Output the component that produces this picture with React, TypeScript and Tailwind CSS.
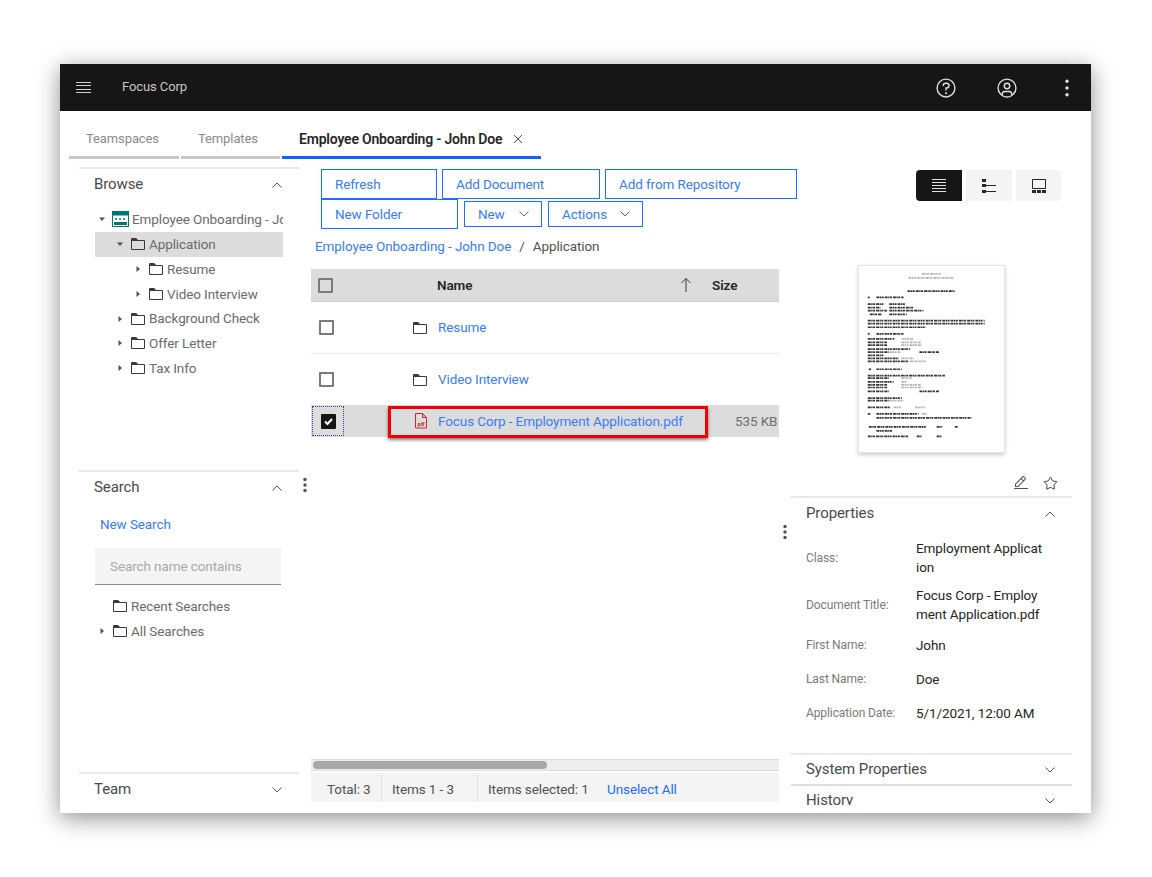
import React from 'react';
import { Star } from 'lucide-react';

// page-thumbnail text lines, measured on a 3x crop: [y, x1, x2, light]
const docLines: Array<[number, number, number, number]> = [
  [341, 395, 452, 1], [353, 355, 492, 1], [393, 352, 495, 0], [412, 232, 238, 0], [412, 258, 340, 0],
  [432, 232, 282, 0], [432, 297, 345, 0], [443, 232, 270, 0], [443, 297, 370, 0], [452, 232, 290, 0],
  [452, 297, 400, 0], [463, 238, 275, 0], [463, 297, 350, 0], [482, 232, 585, 0], [491, 232, 585, 0],
  [502, 232, 408, 0], [522, 232, 238, 0], [522, 258, 340, 0], [537, 232, 312, 0], [537, 335, 370, 1],
  [548, 232, 290, 0], [548, 333, 392, 1], [556, 232, 290, 0], [556, 333, 395, 1], [568, 232, 360, 0],
  [577, 232, 295, 0], [577, 297, 330, 1], [577, 388, 448, 0], [587, 232, 280, 0], [596, 232, 325, 0],
  [596, 333, 370, 1], [605, 232, 355, 0], [605, 360, 410, 1], [629, 235, 242, 0], [629, 258, 335, 0],
  [648, 232, 465, 0], [656, 232, 295, 0], [656, 333, 365, 1], [667, 232, 310, 0], [667, 333, 350, 1],
  [676, 232, 290, 0], [676, 333, 392, 1], [684, 232, 290, 0], [684, 333, 395, 1], [696, 232, 295, 0],
  [696, 388, 448, 0], [716, 232, 335, 0], [724, 232, 295, 0], [724, 297, 340, 1], [744, 232, 300, 0],
  [744, 310, 335, 1], [744, 375, 405, 1], [764, 232, 240, 0], [764, 258, 385, 0], [764, 395, 410, 1],
  [776, 258, 545, 0], [803, 235, 410, 0], [803, 440, 457, 0], [803, 495, 505, 0], [815, 258, 305, 0],
  [832, 232, 355, 0], [832, 380, 395, 0], [832, 440, 455, 0],
];

const FolderIcon = () => (
  <svg width="16" height="16" viewBox="0 0 32 32" fill="#3a3a3a" className="shrink-0">
    <path d="M11.17,6l3.42,3.41.58.59H28V26H4V6h7.17m0-2H4A2,2,0,0,0,2,6V26a2,2,0,0,0,2,2H28a2,2,0,0,0,2-2V10a2,2,0,0,0-2-2H16L12.59,4.59A2,2,0,0,0,11.17,4Z" />
    <path d="M4 5h8l4 4v1H4z" />
  </svg>
);

const Chevron = ({ up = false, color = '#525252', size = 12 }: { up?: boolean; color?: string; size?: number }) => (
  <svg width={size} height={size} viewBox="0 0 12 12" fill="none" stroke={color} strokeWidth="1" className="shrink-0">
    <path d={up ? 'M1.5 8.5 6 4l4.5 4.5' : 'M1.5 3.5 6 8l4.5-4.5'} />
  </svg>
);

const Caret = ({ down = false }: { down?: boolean }) => (
  <svg width="6" height="6" viewBox="0 0 6 6" fill="#525252" className="shrink-0">
    <path d={down ? 'M0 1.5h6L3 5z' : 'M1.5 0v6L5 3z'} />
  </svg>
);

const Kebab = () => (
  <svg width="4" height="16" viewBox="0 0 4 16" fill="#525252">
    <circle cx="2" cy="2.5" r="1.7" />
    <circle cx="2" cy="8" r="1.7" />
    <circle cx="2" cy="13.5" r="1.7" />
  </svg>
);

const Checkbox = () => <div className="h-[15px] w-[15px] shrink-0 rounded-[1px] border-2 border-[#7a7a7a]" />;

const TreeRow = ({ pad, caret, icon, label }: { pad: string; caret?: 'down' | 'right'; icon: React.ReactNode; label: string }) => (
  <div className={`flex h-[24.8px] items-center whitespace-nowrap text-[#6b6b6b] ${pad}`}>
    <div className="mr-[7px] w-[6px] shrink-0">{caret && <Caret down={caret === 'down'} />}</div>
    {icon}
    <span className="ml-[3px]">{label}</span>
  </div>
);

const Action = ({ label, w, chevron }: { label: string; w: string; chevron?: boolean }) => (
  <div className={`flex shrink-0 items-center justify-between border border-[#1f6fff] pl-[13px] text-[#3a7cf6] ${w} ${chevron ? 'h-[26px] pr-[11px]' : 'h-[30px]'}`}>
    <span>{label}</span>
    {chevron && <Chevron color="#1f6fff" />}
  </div>
);

const PropRow = ({ label, lines, h }: { label: string; lines: string[]; h: string }) => (
  <div className={`flex items-center ${h}`}>
    <div className="w-[110px] shrink-0 text-[12px] text-[#7a7a7a]">{label}</div>
    <div className="whitespace-nowrap leading-[19px] text-[#262626]">
      {lines.map((l) => (
        <div key={l}>{l}</div>
      ))}
    </div>
  </div>
);

export default function App() {
  return (
    <div className="min-h-[877px] bg-white pl-[60px] pt-[64px] font-['Roboto',sans-serif] text-[13.5px] tracking-[-0.1px]">
      <div className="flex h-[749px] w-[1031px] flex-col overflow-hidden bg-white shadow-[0_5px_22px_rgba(0,0,0,0.45)]">
        {/* top bar */}
        <header className="flex h-[47px] shrink-0 items-center bg-[#161616] text-white">
          <div className="ml-[16px] flex h-[11px] w-[15px] flex-col justify-between">
            <div className="h-px bg-[#d0d0d0]" />
            <div className="h-px bg-[#d0d0d0]" />
            <div className="h-px bg-[#d0d0d0]" />
            <div className="h-px bg-[#d0d0d0]" />
          </div>
          <span className="ml-[31px] pb-px text-[13px] text-[#c6c6c6]">Focus Corp</span>
          <div className="ml-auto flex items-center">
            <svg width="22" height="22" viewBox="0 0 32 32" fill="#e0e0e0">
              <path d="M16,2A14,14,0,1,0,30,16,14,14,0,0,0,16,2Zm0,26A12,12,0,1,1,28,16,12,12,0,0,1,16,28Z" />
              <circle cx="16" cy="23.5" r="1.5" />
              <path d="M17,8H15.5A4.49,4.49,0,0,0,11,12.5V13h2v-.5A2.5,2.5,0,0,1,15.5,10H17a2.5,2.5,0,0,1,0,5H15v4.5h2V17a4.5,4.5,0,0,0,0-9Z" />
            </svg>
            <svg className="ml-[39px]" width="22" height="22" viewBox="0 0 32 32" fill="#e0e0e0">
              <path d="M16,8a5,5,0,1,0,5,5A5,5,0,0,0,16,8Zm0,8a3,3,0,1,1,3-3A3.0034,3.0034,0,0,1,16,16Z" />
              <path d="M16,2A14,14,0,1,0,30,16,14.0158,14.0158,0,0,0,16,2ZM10,26.3765V25a3.0033,3.0033,0,0,1,3-3h6a3.0033,3.0033,0,0,1,3,3v1.3765a11.8989,11.8989,0,0,1-12,0Zm13.9925-1.4507A5.0016,5.0016,0,0,0,19,20H13a5.0016,5.0016,0,0,0-4.9925,4.9258,12,12,0,1,1,15.985,0Z" />
            </svg>
            <svg className="ml-[47px] mr-[22px]" width="4" height="18" viewBox="0 0 4 18" fill="#e0e0e0">
              <circle cx="2" cy="2.300" r="1.700" />
              <circle cx="2" cy="9" r="1.700" />
              <circle cx="2" cy="15.700" r="1.700" />
            </svg>
          </div>
        </header>

        {/* tabs */}
        <div className="flex h-[48px] shrink-0 pl-[9px] pt-[1px]">
          <div className="mr-[2px] flex h-[47px] w-[110px] items-center border-b-[3px] border-[#c6c6c6] pl-[17px] pt-[10px] text-[13px] text-[#8a8a8a]">Teamspaces</div>
          <div className="mr-[2px] flex h-[47px] w-[99px] items-center border-b-[3px] border-[#c6c6c6] pl-[17px] pt-[10px] text-[13px] text-[#8a8a8a]">Templates</div>
          <div className="flex h-[47px] w-[259px] items-center border-b-[3px] border-[#0f62fe] pl-[17px] pt-[10px] text-[14px] font-semibold tracking-[-0.2px] text-[#262626]">
            Employee Onboarding - John Doe
            <svg className="ml-[11px]" width="10" height="10" viewBox="0 0 10 10" stroke="#525252" strokeWidth="1">
              <path d="M1 1l8 8M9 1l-8 8" />
            </svg>
          </div>
        </div>

        <div className="flex min-h-0 flex-1 pl-[19px]">
          {/* left column */}
          <aside className="flex w-[220px] shrink-0 flex-col pt-[8px]">
            <section className="h-[303px] shrink-0 border-t-2 border-[#e8e8e8]">
              <div className="flex h-[31px] items-center justify-between pl-[15px] pr-[16px] text-[15px] text-[#4a4a4a]">
                Browse
                <Chevron up />
              </div>
              <div className="ml-[16px] mt-[7px] w-[188px] overflow-hidden">
                <TreeRow
                  pad="pl-[4px]"
                  caret="down"
                  label="Employee Onboarding - John Doe"
                  icon={
                    <svg width="17" height="16" viewBox="0 0 17 16" className="shrink-0">
                      <rect x="0.5" y="0.5" width="16" height="15" fill="#fff" stroke="#00796b" />
                      <rect x="0.5" y="0.5" width="16" height="4" fill="#00796b" />
                      <rect x="2" y="11" width="13" height="3" fill="#00796b" />
                      <path d="M3 8h2M7 8h2M11 8h2" stroke="#00796b" strokeWidth="1.5" />
                    </svg>
                  }
                />
                <div className="bg-[#dcdcdc]">
                  <TreeRow pad="pl-[22px]" caret="down" label="Application" icon={<FolderIcon />} />
                </div>
                <TreeRow pad="pl-[40px]" caret="right" label="Resume" icon={<FolderIcon />} />
                <TreeRow pad="pl-[40px]" caret="right" label="Video Interview" icon={<FolderIcon />} />
                <TreeRow pad="pl-[22px]" caret="right" label="Background Check" icon={<FolderIcon />} />
                <TreeRow pad="pl-[22px]" caret="right" label="Offer Letter" icon={<FolderIcon />} />
                <TreeRow pad="pl-[22px]" caret="right" label="Tax Info" icon={<FolderIcon />} />
              </div>
            </section>
            <section className="h-[302px] shrink-0 border-t-2 border-[#e8e8e8]">
              <div className="flex h-[31px] items-center justify-between pl-[15px] pr-[16px] text-[15px] text-[#4a4a4a]">
                Search
                <Chevron up />
              </div>
              <div className="ml-[21px] mt-[11px] leading-[20px] text-[#3a7cf6]">New Search</div>
              <div className="ml-[16px] mt-[14px] flex h-[37px] w-[186px] items-center border-b border-[#8d8d8d] bg-[#f4f4f4] pl-[15px] text-[#a8a8a8]">
                Search name contains
              </div>
              <div className="ml-[16px] mt-[9px]">
                <TreeRow pad="pl-[4px]" label="Recent Searches" icon={<FolderIcon />} />
                <TreeRow pad="pl-[4px]" caret="right" label="All Searches" icon={<FolderIcon />} />
              </div>
            </section>
            <section className="flex-1 border-t-2 border-[#e8e8e8]">
              <div className="flex h-[31px] items-center justify-between pl-[15px] pr-[16px] text-[15px] text-[#4a4a4a]">
                Team
                <Chevron />
              </div>
            </section>
          </aside>

          {/* left splitter */}
          <div className="flex w-[12px] shrink-0 justify-center pt-[318px]">
            <div>
              <Kebab />
            </div>
          </div>

          {/* centre column */}
          <main className="flex w-[468px] shrink-0 flex-col pt-[10px]">
            <div className="flex gap-[5px] pl-[10px]">
              <Action label="Refresh" w="w-[116px]" />
              <Action label="Add Document" w="w-[158px]" />
              <Action label="Add from Repository" w="w-[192px]" />
            </div>
            <div className="flex items-center gap-[6px] pl-[10px]">
              <Action label="New Folder" w="w-[137px]" />
              <Action label="New" w="w-[78px]" chevron />
              <Action label="Actions" w="w-[95px]" chevron />
            </div>
            <div className="flex h-[40px] shrink-0 items-center pb-[6px] pl-[4px]">
              <span className="text-[#3a7cf6]">Employee Onboarding - John Doe</span>
              <span className="mx-[8px] text-[#525252]">/</span>
              <span className="text-[#525252]">Application</span>
            </div>

            <div className="flex h-[33px] shrink-0 items-center border-b border-[#d0d0d0] bg-[#dcdcdc] pl-[7px] font-semibold text-[#262626]">
              <Checkbox />
              <span className="ml-[104px] w-[243px]">Name</span>
              <svg width="12" height="16" viewBox="0 0 12 16" fill="none" stroke="#393939" strokeWidth="1">
                <path d="M6 15V1.5M1.5 6 6 1.5 10.500 6" />
              </svg>
              <span className="ml-[20px]">Size</span>
            </div>
            <div className="flex h-[52px] shrink-0 items-center border-b border-[#e8e8e8] pl-[8px]">
              <Checkbox />
              <div className="ml-[78px]">
                <FolderIcon />
              </div>
              <span className="ml-[10px] text-[#3a7cf6]">Resume</span>
            </div>
            <div className="flex h-[51px] shrink-0 items-center pl-[8px]">
              <Checkbox />
              <div className="ml-[78px]">
                <FolderIcon />
              </div>
              <span className="ml-[10px] text-[#3a7cf6]">Video Interview</span>
            </div>
            <div className="relative flex h-[32px] shrink-0 items-center overflow-visible bg-[#dcdcdc]">
              <div className="ml-px flex h-[30px] w-[32px] items-center justify-center border border-dotted border-[#3d3d9e]">
                <div className="flex h-[15px] w-[15px] items-center justify-center rounded-[1px] bg-[#161616]">
                  <svg width="11" height="11" viewBox="0 0 11 11" fill="none" stroke="#fff" strokeWidth="2">
                    <path d="M2 5.500 4.500 8 9 3" />
                  </svg>
                </div>
              </div>
              <div className="absolute left-[77px] top-px flex h-[32px] w-[320px] items-center border-[3px] border-[#f00000] pb-[2px] pl-[23px] shadow-[0_2px_3px_rgba(0,0,0,0.5)]">
                <svg width="14" height="16" viewBox="0 0 14 16" fill="none" stroke="#da1e28" strokeWidth="1" className="shrink-0">
                  <path d="M1.500 15V.5h7l4 4V15zM8.500.5v4h4" />
                  <text x="7" y="13" textAnchor="middle" fontSize="5" fontWeight="700" fill="#da1e28" stroke="none">pdf</text>
                </svg>
                <span className="ml-[10px] whitespace-nowrap text-[#3a7cf6]">Focus Corp - Employment Application.pdf</span>
              </div>
              <span className="ml-auto w-[44px] overflow-hidden whitespace-nowrap text-[#6f6f6f]">535 KB</span>
            </div>

            <div className="flex-1" />

            <div className="h-[12px] shrink-0 border-y border-[#dcdcdc] bg-[#eeeeee] px-[2px] py-[1px]">
              <div className="h-[8px] w-[234px] rounded-[4px] bg-[#a8a8a8]" />
            </div>
            <div className="mt-[2px] flex h-[29px] shrink-0 items-center bg-[#f4f4f4] text-[#525252]">
              <div className="flex h-full w-[71px] items-center border-r border-[#e0e0e0] pl-[16px] pt-[3px]">Total: 3</div>
              <div className="flex h-full w-[96px] items-center border-r border-[#e0e0e0] pl-[10px] pt-[3px]">Items 1 - 3</div>
              <span className="ml-[10px] w-[119px] pt-[3px]">Items selected: 1</span>
              <span className="pt-[3px] text-[#1f6fff]">Unselect All</span>
            </div>
            <div className="h-[11px] shrink-0" />
          </main>

          {/* right splitter */}
          <div className="flex w-[12px] shrink-0 justify-center pt-[365px]">
            <div>
              <Kebab />
            </div>
          </div>

          {/* right column */}
          <aside className="flex w-[281px] shrink-0 flex-col overflow-hidden pt-[11px]">
            <div className="flex gap-[4px] pl-[125px]">
              <div className="flex h-[31px] w-[46px] items-center justify-center rounded-l-[4px] bg-[#161616]">
                <div className="flex h-[13px] w-[14px] flex-col justify-between">
                  <div className="h-px bg-[#e0e0e0]" />
                  <div className="h-px bg-[#e0e0e0]" />
                  <div className="h-px bg-[#e0e0e0]" />
                  <div className="h-px bg-[#e0e0e0]" />
                  <div className="h-px bg-[#e0e0e0]" />
                </div>
              </div>
              <div className="flex h-[31px] w-[46px] items-center justify-center bg-[#f4f4f4]">
                <svg width="14" height="14" viewBox="0 0 14 14" fill="#262626">
                  <rect x="0" y="0" width="4" height="3" />
                  <rect x="0" y="5" width="4" height="3" />
                  <rect x="0" y="11" width="4" height="3" />
                  <rect x="4" y="6" width="10" height="1" />
                  <rect x="4" y="12" width="10" height="1" />
                </svg>
              </div>
              <div className="flex h-[31px] w-[45px] items-center justify-center rounded-r-[4px] bg-[#f4f4f4]">
                <svg width="14" height="14" viewBox="0 0 14 14" fill="#262626">
                  <path d="M0.500 0.500h13v9h-13z" fill="none" stroke="#262626" />
                  <rect x="0" y="11" width="4" height="3" />
                  <rect x="5" y="11" width="4" height="3" />
                  <rect x="10" y="11" width="4" height="3" />
                </svg>
              </div>
            </div>

            <div className="ml-[67px] mt-[64px] h-[188px] w-[147px] shrink-0 border border-[#e4e4e4] bg-white shadow-[0_2px_4px_rgba(0,0,0,0.2)]">
              <svg className="blur-[0.3px]" width="145" height="186" viewBox="206 317 437 562">
                {docLines.map(([y, x1, x2, light], i) => (
                  <line
                    key={i}
                    x1={x1}
                    x2={x2}
                    y1={y}
                    y2={y}
                    stroke={light ? '#b5b5b5' : '#333333'}
                    strokeWidth="5"
                    strokeDasharray="9 1.5 4 1.5 6 3"
                  />
                ))}
              </svg>
            </div>

            <div className="mt-[21px] flex h-[18px] shrink-0 items-center justify-end pr-[14px]">
              <svg width="16" height="16" viewBox="0 0 32 32" fill="#525252">
                <path d="M2 26H30V28H2z" />
                <path d="M25.4,9c0.8-0.8,0.8-2,0-2.8c0,0,0,0,0,0l-3.6-3.6c-0.8-0.8-2-0.8-2.8,0c0,0,0,0,0,0l-15,15V24h6.400L25.4,9z M20.4,4L24,7.600 l-3,3L17.400,7L20.400,4z M6,22v-3.600l10-10l3.600,3.600l-10,10H6z" />
              </svg>
              <Star className="ml-[14px]" size={15} strokeWidth={1.4} color="#262626" />
            </div>

            <section className="mt-[4px] h-[257px] shrink-0 border-t-2 border-[#e8e8e8]">
              <div className="flex h-[31px] items-center justify-between pl-[15px] pr-[16px] text-[15px] text-[#4a4a4a]">
                Properties
                <Chevron up />
              </div>
              <div className="pl-[15px] pt-[5px]">
                <PropRow h="h-[47px]" label="Class:" lines={['Employment Applicat', 'ion']} />
                <PropRow h="h-[47px]" label="Document Title:" lines={['Focus Corp - Employ', 'ment Application.pdf']} />
                <PropRow h="h-[34px]" label="First Name:" lines={['John']} />
                <PropRow h="h-[34px]" label="Last Name:" lines={['Doe']} />
                <PropRow h="h-[34px]" label="Application Date:" lines={['5/1/2021, 12:00 AM']} />
              </div>
            </section>
            <section className="h-[31px] shrink-0 border-t-2 border-[#e8e8e8]">
              <div className="flex h-[29px] items-center justify-between pl-[15px] pr-[16px] text-[15px] text-[#4a4a4a]">
                System Properties
                <Chevron />
              </div>
            </section>
            {/* the panel is cut just under its title, as in the reference */}
            <section className="h-[21px] shrink-0 overflow-hidden border-t-2 border-[#dcdcdc]">
              <div className="flex h-[29px] items-center justify-between pl-[15px] pr-[16px] text-[15px] text-[#4a4a4a]">
                History
                <Chevron />
              </div>
            </section>
          </aside>
        </div>
      </div>
    </div>
  );
}
